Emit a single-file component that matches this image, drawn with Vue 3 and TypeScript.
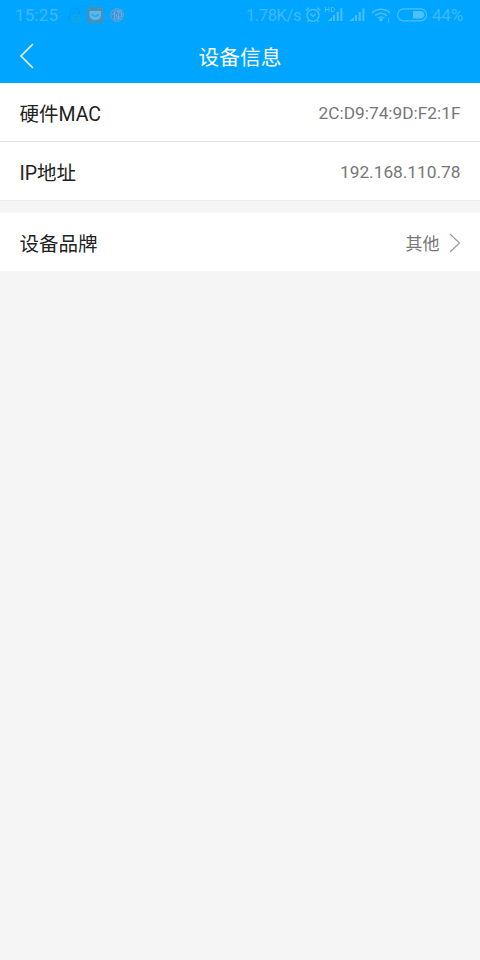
<script setup lang="ts">
interface Row {
  label: string
  value: string
  link?: boolean
}

const groups: Row[][] = [
  [
    { label: '硬件MAC', value: '2C:D9:74:9D:F2:1F' },
    { label: 'IP地址', value: '192.168.110.78' },
  ],
  [{ label: '设备品牌', value: '其他', link: true }],
]
</script>

<template>
  <main class="screen">
    <header class="header">
      <div class="status">
        <span class="clock">15:25</span>
        <svg class="notices" width="62" height="20" viewBox="0 0 62 20" fill="none">
          <path d="M5 15c-2-1-1-3 0-4 0-5 1-8 5-8 3.500 0 4.500 3 4.500 6" stroke="#0796f4" />
          <rect x="7.500" y="10.500" width="7" height="6" rx="1" stroke="#20a8cc" />
          <path d="M9 13.500h1m1 0h1m1 0h1" stroke="#20a8cc" />
          <rect x="22" y="2" width="16.500" height="16" rx="3.500" fill="#4a8fb5" />
          <path d="M24.500 6h11.500v3c0 4-2 6-5.750 6s-5.750-2-5.750-6z" fill="#52baf5" />
          <path d="M27 9c1 3 5.500 3 6.500 0" stroke="#438dba" stroke-width="1.200" />
          <circle cx="52" cy="10" r="7" fill="#3d91d5" />
          <circle cx="52" cy="10" r="6.300" stroke="#5aa9de" />
          <path d="M50.500 4.500l-1 3-2 2m2-2v7m2-8.500h5m-3-1-1 3h4v4h-5v-3m2 0v5m-4 0h7" stroke="#70b8eb" stroke-width=".8" />
        </svg>
        <span class="spacer" />
        <span class="speed">1.78K/s</span>
        <svg class="signals" width="128" height="24" viewBox="0 0 128 24" fill="none" stroke="#4dbfff">
          <g stroke-width="1.300">
            <circle cx="11" cy="12.300" r="6" />
            <path d="M3.700 7.600 7 4.800m8 0 3.300 2.800M8.200 11l2.800 2.500 2.800-2.500M6.500 17.400 5.500 18.900m10-1.500 1 1.500" />
          </g>
          <path d="M23.500 4v5m3.500-5v5m-3.500-2.500H27M29.500 4.500v4h1.500c2 0 2-4 0-4z" stroke-width=".9" />
          <g fill="#4dbfff" stroke="none">
            <path d="M25.500 18l4.500-3.500V18zM31 12h2v6h-2zM34.700 9h2v9h-2zM38.400 5.300h2V18h-2z" />
            <path d="M47.300 18l4.500-3.500V18zM53 12h2v6h-2zM56.700 9h2v9h-2zM60.400 5.300h2V18h-2z" />
            <circle cx="79" cy="16.700" r="1.700" />
          </g>
          <path d="M70 9.800c5-4.700 13-4.700 18 0M73 12.700c4-3.300 8-3.300 12 0" stroke-width="1.600" />
          <path d="M75.800 15.300c2-1.700 4.400-1.700 6.400 0" stroke-width="1.300" />
          <path d="M86.500 15v5" stroke-width=".8" />
          <rect x="95.600" y="5.800" width="29" height="12" rx="6" stroke-width="1.200" />
          <path d="M111 8h7c6 0 6 7.500 0 7.500h-7z" fill="#4dbfff" stroke="none" />
        </svg>
        <span class="battery">44%</span>
      </div>
      <nav class="nav">
        <svg class="back" width="16" height="28" viewBox="0 0 16 28" fill="none">
          <path d="M14 2 2 14l12 12" stroke="#fff" stroke-width="1.500" />
        </svg>
        <h1 class="title">设备信息</h1>
      </nav>
    </header>

    <section v-for="(rows, i) in groups" :key="i" class="group">
      <div v-for="row in rows" :key="row.label" class="row">
        <span class="label">{{ row.label }}</span>
        <span class="value" :class="{ linked: row.link }">{{ row.value }}</span>
        <svg v-if="row.link" class="chevron" width="12" height="20" viewBox="0 0 12 20" fill="none">
          <path d="M1 1l9.500 9L1 19" stroke="#999" stroke-width="1.200" />
        </svg>
      </div>
    </section>
  </main>
</template>

<style>
body {
  background: #f5f5f5;
}
</style>

<style scoped>
.screen {
  min-height: 960px;
  background: #f5f5f5;
  font-family: Roboto, 'Noto Sans CJK SC', sans-serif;
}
.header {
  height: 83px;
  background: #00a5ff;
}
.status {
  display: flex;
  align-items: center;
  box-sizing: border-box;
  height: 30px;
  padding: 0 15px;
  color: #3fb9ff;
  font-size: 17px;
  line-height: 31px;
  white-space: nowrap;
}
.status span,
.status svg {
  flex-shrink: 0;
}
.status .spacer {
  flex: 1;
}
.clock {
  width: 43px;
  letter-spacing: 0.2px;
}
.notices {
  margin-left: 7px;
}
.speed {
  width: 56px;
  font-size: 16.400px;
  letter-spacing: -0.350px;
}
.battery {
  width: 34px;
  margin-left: 2px;
  font-size: 17px;
  letter-spacing: -0.200px;
  margin-right: -1px;
}
.nav {
  display: grid;
  grid-template-columns: 16px 1fr 16px;
  align-items: center;
  height: 52px;
  padding: 0 19px;
}
.title {
  margin: 0;
  padding-top: 3px;
  color: #fff;
  font-size: 20.700px;
  font-weight: 400;
  line-height: 48px;
  text-align: center;
}
.group + .group {
  margin-top: 12px;
}
.row {
  display: flex;
  align-items: center;
  height: 58px;
  padding: 0 19.500px;
  border-bottom: 1px solid #e5e5e5;
  background: #fff;
}
.row:last-child {
  border-bottom-color: #eee;
}
.group:last-child .row {
  border-bottom: 0;
}
.label {
  flex: 1;
  padding-top: 5px;
  color: #222;
  font-size: 19.500px;
  line-height: 28px;
}
.value {
  padding-top: 2px;
  color: #777;
  font-size: 17.300px;
}
.value.linked {
  padding-top: 0;
  font-size: 17px;
}
.chevron {
  margin-top: 1px;
  margin-left: 9px;
}
</style>
